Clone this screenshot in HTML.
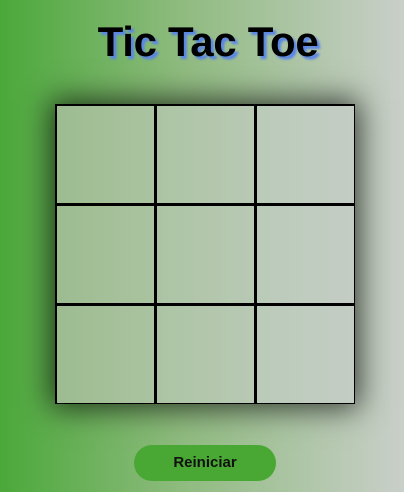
<!DOCTYPE html>
<html><head><style>
html,body{margin:0;padding:0;width:404px;height:492px;overflow:hidden}
body{background:linear-gradient(to right,#4ba83a 0%,#8fbb7f 45%,#c9cfc9 100%);font-family:"Liberation Sans",Arial,sans-serif;position:relative}
h1{position:absolute;top:19px;left:6px;width:404px;margin:0;text-align:center;font-size:42px;font-weight:bold;color:#000;text-shadow:3px 3px 2px #5a86e6;letter-spacing:-0.3px;line-height:46px}
.board{position:absolute;left:55px;top:104px;width:300px;height:300px;box-sizing:border-box;background:#000;padding:2px;display:grid;grid-template-columns:97px 97px 97px;grid-template-rows:97px 97px 97px;gap:3px;box-shadow:0 0 28px 4px rgba(0,0,0,0.7)}
.a{background:linear-gradient(to right,#9dbc90,#aac3a0)}
.b{background:linear-gradient(to right,#acc4a4,#b8c9b4)}
.d{background:linear-gradient(to right,#bacbb9,#c4ccc4)}
.btn{position:absolute;left:134px;top:445px;width:142px;height:36px;border-radius:18px;background:#49a733;text-align:center;line-height:36px;font-weight:bold;font-size:15px;color:#111}
</style></head><body>
<h1>Tic Tac Toe</h1>
<div class="board">
<div class="a"></div><div class="b"></div><div class="d"></div>
<div class="a"></div><div class="b"></div><div class="d"></div>
<div class="a"></div><div class="b"></div><div class="d"></div>
</div>
<div class="btn">Reiniciar</div>
</body></html>
